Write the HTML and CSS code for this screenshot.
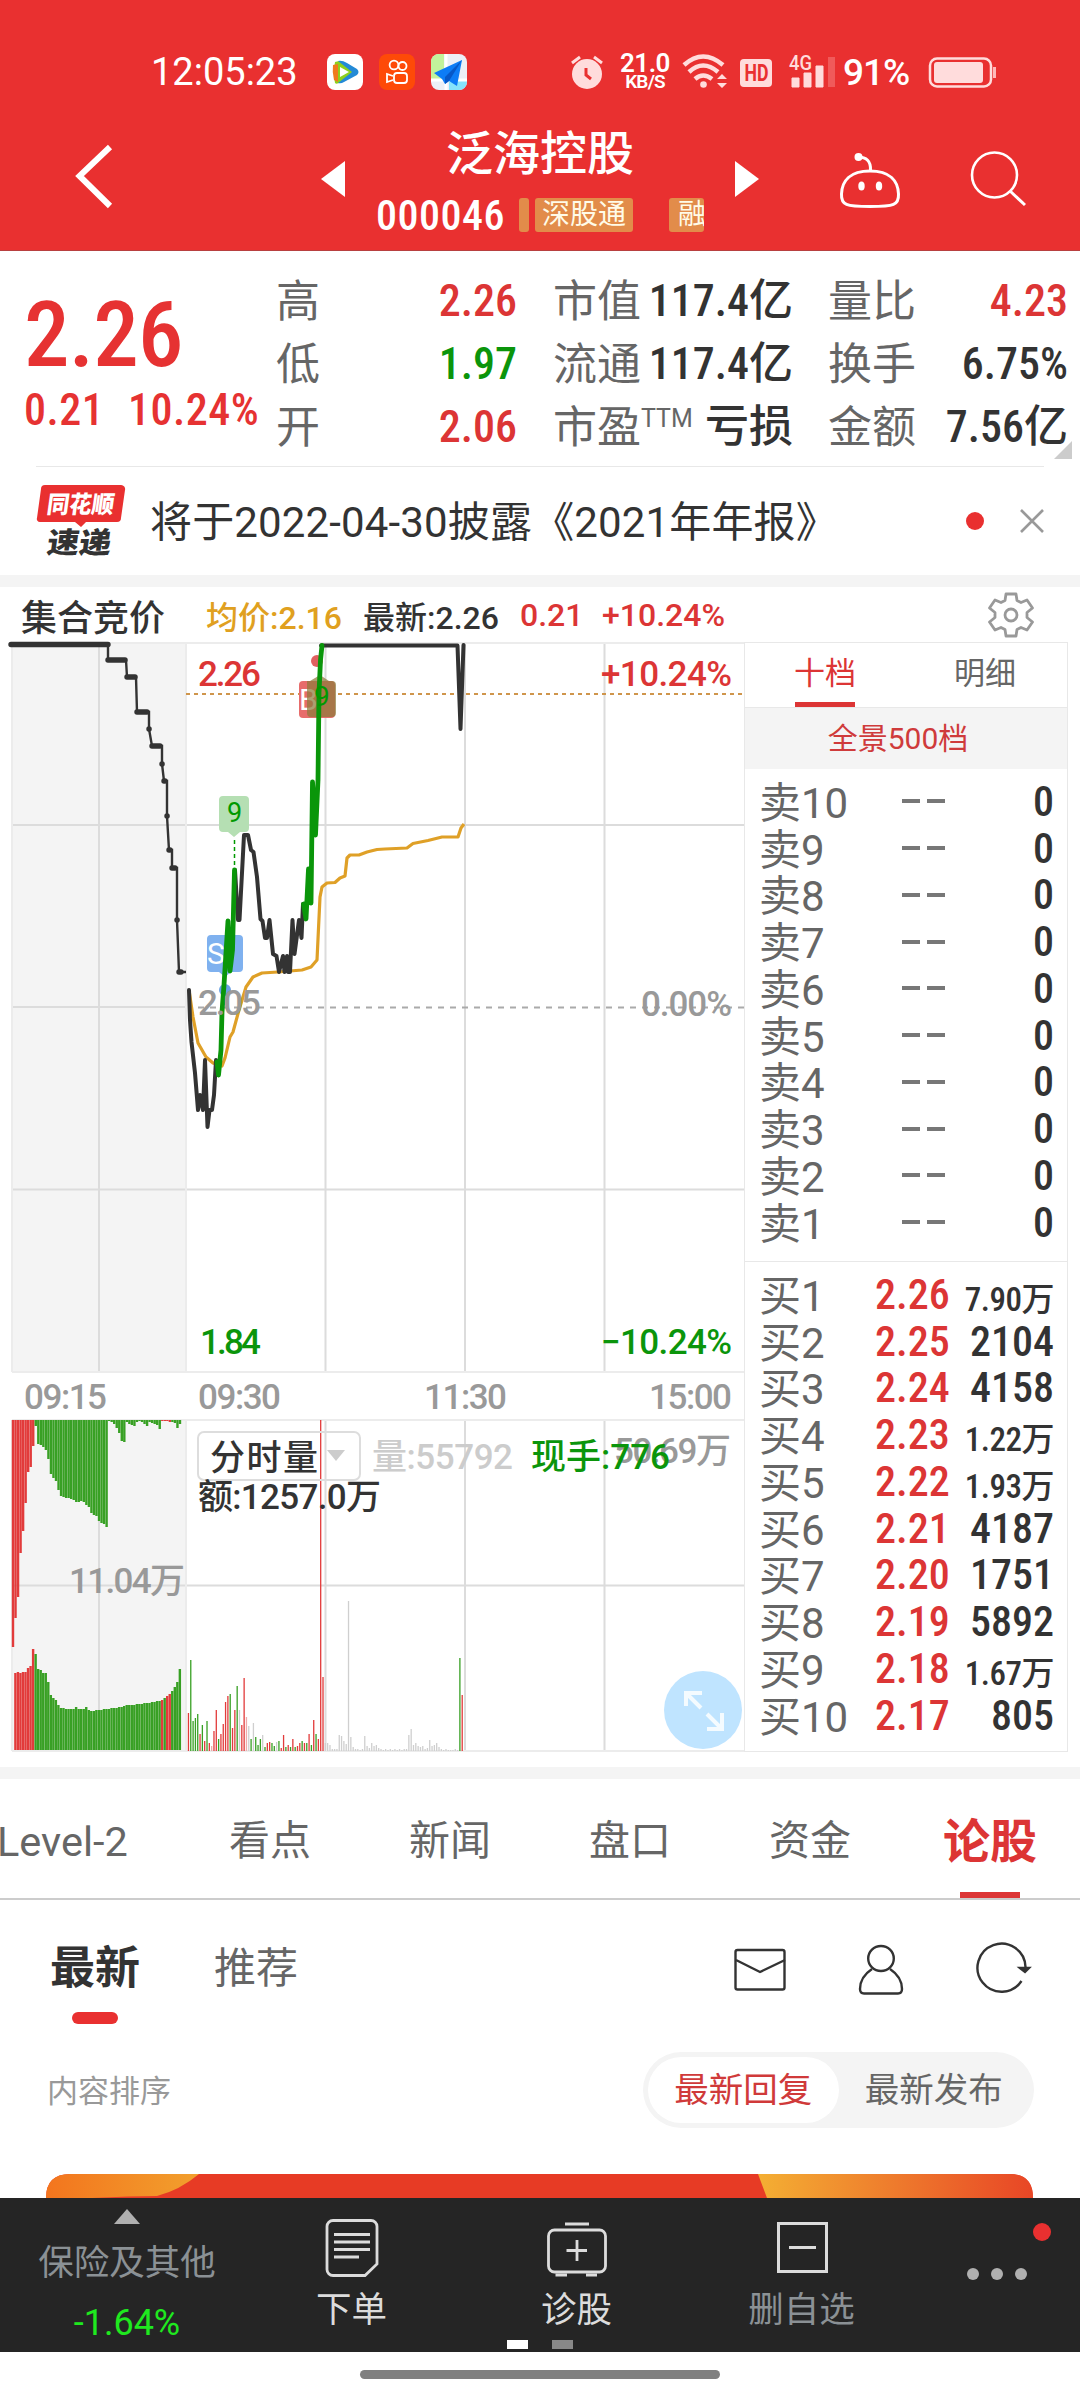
FILE: index.html
```html
<!DOCTYPE html>
<html lang="zh-CN">
<head>
    <meta charset="UTF-8">
    <title>泛海控股 000046</title>
    <link rel="stylesheet" href="styles.css">
</head>
<body>

    <header class="header">
        <div class="status">
            <span class="time">12:05:23</span>
            <svg class="apps" width="140" height="36" viewBox="327 54 140 36">
                <rect x="327" y="54" width="36" height="36" rx="8" fill="#fff"/>
                <path d="M335 62 Q333 72 335 83 Q337 85 342 81 L357 72 Q346 62 339 61Z" fill="#8ed01c"/>
                <path d="M333 65 Q332 72 334 80 L338 82 V64Z" fill="#f07a1c"/>
                <path d="M338 61 Q342 60 347 63 L357 69 Q360 72 357 75 L344 82 Q341 84 338 83 L352 72Z" fill="#238ad6"/>
                <path d="M340 67 L349 72 L340 77Z" fill="#fff"/>
                <rect x="379" y="54" width="36" height="36" rx="8" fill="#fe4a08"/>
                <g fill="none" stroke="#fff" stroke-width="1.8">
                    <circle cx="394" cy="65" r="4.4"/><circle cx="402.500" cy="66" r="4"/>
                    <rect x="394" y="73" width="13" height="10" rx="3"/><path d="M393 76 L387 74 V82 L393 80"/>
                </g>
                <rect x="431" y="54" width="36" height="36" rx="8" fill="#eceff6"/>
                <path d="M431 62 a8 8 0 0 1 8 -8 H444 V79 H431Z" fill="#c2f29b"/>
                <path d="M449 81 H467 V82 a8 8 0 0 1 -8 8 H449Z" fill="#86e3fb"/>
                <path d="M431 80 H467 M446 54 V90" stroke="#fff" stroke-width="3"/>
                <path d="M462 60 L434 73 L442 79 L445 84 L449 81 L457 86Z" fill="#0d7cf6"/>
                <path d="M462 60 L445 77 V84 L449 81Z" fill="#0758c8"/>
            </svg>
            <svg class="alarm" width="34" height="36" viewBox="570 54 34 36">
                <circle cx="587" cy="74" r="15" fill="#ffdcdc"/>
                <path d="M572 63 L580 57 M594 57 L602 63" stroke="#ffdcdc" stroke-width="3"/>
                <path d="M586 68 V75 L591 79" stroke="#e93030" stroke-width="3" fill="none"/>
            </svg>
            <span class="speed"><b>21.0</b><i>KB/S</i></span>
            <svg class="signal" width="152" height="36" viewBox="683 54 152 36">
                <g fill="none" stroke="#ffdcdc" stroke-width="4.500">
                    <path d="M684 65 Q703 48 723 65"/><path d="M689 72 Q703 59 718 72"/><path d="M695 79 Q703 72 712 79"/>
                </g>
                <circle cx="703.500" cy="84.500" r="3.300" fill="#ffdcdc"/>
                <path d="M717 79 L722 74 L727 79Z M717 83 L722 88 L727 83Z" fill="#ffdcdc"/>
                <rect x="740" y="59" width="32" height="28" rx="4" fill="#ffdcdc"/>
                <text x="744.500" y="81" class="hd" textLength="24" lengthAdjust="spacingAndGlyphs">HD</text>
                <text x="789" y="70" class="g4" textLength="23" lengthAdjust="spacingAndGlyphs">4G</text>
                <path d="M792 78 H799 V87 H792Z M804 73 H811 V87 H804Z M816 66 H823 V87 H816Z" fill="#ffdcdc" stroke="#ffdcdc" stroke-linejoin="round"/>
                <path d="M828 57 H835 V87 H828Z" fill="#f05a5a"/>
            </svg>
            <span class="percent">91%</span>
            <svg class="battery" width="70" height="36" viewBox="928 54 70 36">
                <rect x="931" y="58.500" width="61" height="28" rx="7" fill="none" stroke="#ffdcdc" stroke-width="2.500"/>
                <rect x="935" y="62" width="49" height="21" rx="3" fill="#ffdcdc"/>
                <path d="M995.500 67 V78" stroke="#ffb8b8" stroke-width="3"/>
            </svg>
        </div>
        <div class="nav">
            <svg class="back" width="40" height="70" viewBox="75 141 40 70"><path d="M110 147 L79.500 176 L110 206" fill="none" stroke="#fff" stroke-width="6"/></svg>
            <svg class="prev" width="24" height="36" viewBox="0 0 24 36"><path d="M24 0 V36 L0 18Z" fill="#fff"/></svg>
            <div class="stock">
                <h1>泛海控股</h1>
                <div class="code-row">
                    <span class="code num">000046</span>
                    <span class="tag tag-edge"></span>
                    <span class="tag">深股通</span>
                    <span class="tag tag-cut">融</span>
                </div>
            </div>
            <svg class="next" width="24" height="36" viewBox="0 0 24 36"><path d="M0 0 V36 L24 18Z" fill="#fff"/></svg>
            <svg class="robot" width="64" height="60" viewBox="838 150 64 60">
                <path d="M870 171 C890 171 898 181 898.500 194 C899 205 894 206.500 870 206.500 C846 206.500 841 205 841.500 194 C842 181 850 171 870 171Z" fill="none" stroke="#fff" stroke-width="3"/>
                <path d="M858 157 Q871 157 870.500 170" fill="none" stroke="#fff" stroke-width="3"/>
                <circle cx="858.500" cy="157" r="4" fill="#fff"/>
                <ellipse cx="861.500" cy="186" rx="3.200" ry="4.500" fill="#fff"/><ellipse cx="879" cy="186" rx="3.200" ry="4.500" fill="#fff"/>
            </svg>
            <svg class="search" width="58" height="60" viewBox="969 149 58 60">
                <circle cx="994.500" cy="175" r="22.500" fill="none" stroke="#fff" stroke-width="2.600"/>
                <path d="M1010 191 L1025 205" stroke="#fff" stroke-width="3"/>
            </svg>
        </div>
    </header>

    <section class="quote">
        <div class="price">
            <div class="now num">2.26</div>
            <div class="change num"><span>0.21</span><span>10.24%</span></div>
        </div>
        <dl class="stats stats-a">
            <div><dt>高</dt><dd class="num red">2.26</dd></div>
            <div><dt>低</dt><dd class="num green">1.97</dd></div>
            <div><dt>开</dt><dd class="num red">2.06</dd></div>
        </dl>
        <dl class="stats stats-b">
            <div><dt>市值</dt><dd class="num">117.4亿</dd></div>
            <div><dt>流通</dt><dd class="num">117.4亿</dd></div>
            <div><dt>市盈<sup>TTM</sup></dt><dd>亏损</dd></div>
        </dl>
        <dl class="stats stats-c">
            <div><dt>量比</dt><dd class="num red">4.23</dd></div>
            <div><dt>换手</dt><dd class="num">6.75%</dd></div>
            <div><dt>金额</dt><dd class="num">7.56亿</dd></div>
        </dl>
    </section>

    <section class="news">
        <svg class="logo" width="90" height="76" viewBox="36 483 90 76">
            <path d="M45 485 H121 a4 4 0 0 1 4 5 L121 518 a4 4 0 0 1 -4 4 H86 L81 527 L75 522 H40 a3 3 0 0 1 -3 -4 L41 489 a4 4 0 0 1 4 -4Z" fill="#e93030"/>
            <text class="logo-top" x="0" y="0" transform="translate(46 513) skewX(-8)" textLength="67" lengthAdjust="spacingAndGlyphs">同花顺</text>
            <text class="logo-bottom" x="0" y="0" transform="translate(46 553) skewX(-8)" textLength="64" lengthAdjust="spacingAndGlyphs">速递</text>
        </svg>
        <p>将于2022-04-30披露《2021年年报》</p>
        <span class="dot"></span>
        <svg class="close" width="24" height="24" viewBox="0 0 24 24"><path d="M1 1 L23 23 M23 1 L1 23" stroke="#999" stroke-width="2.600"/></svg>
    </section>

    <div class="gap"></div>

    <section class="legend">
        <span class="auction">集合竞价</span>
        <span class="avg">均价:2.16</span>
        <span class="last">最新:2.26</span>
        <span class="diff">0.21</span>
        <span class="pct">+10.24%</span>
        <svg class="gear" width="48" height="48" viewBox="-24 -24 48 48" fill="none" stroke="#999" stroke-width="2.800" stroke-linejoin="round">
            <path d="M-5 -21 H5 L6 -14.500 L10 -12.500 L16 -15 L21.500 -7 L16 -2.500 V2.500 L21.500 7 L16 15 L10 12.500 L6 14.500 L5 21 H-5 L-6 14.500 L-10 12.500 L-16 15 L-21.500 7 L-16 2.500 V-2.500 L-21.500 -7 L-16 -15 L-10 -12.500 L-6 -14.500Z"/>
            <circle r="6"/>
        </svg>
    </section>

    <main class="board">
        <svg class="chart" width="744" height="1125" viewBox="0 642 744 1125">
            <!-- 网格 -->
            <rect x="12" y="643" width="174" height="729" fill="#f4f4f4"/>
            <rect x="12" y="1420" width="174" height="331" fill="#f4f4f4"/>
            <g class="grid">
                <path d="M99 643 V1372 M325.500 643 V1372 M465 643 V1372 M604.500 643 V1372 M12 825 H744 M12 1007 H186 M12 1189.500 H744"/>
                <path d="M99 1420 V1751 M325.500 1420 V1751 M465 1420 V1751 M604.500 1420 V1751 M12 1585.500 H744"/>
            </g>
            <path class="frame" d="M12 643 H744 M12 1372 H744 M12 643 V1372 M186 643 V1372 M12 1420 H744 M12 1751 H744 M12 1420 V1751 M186 1420 V1751"/>
            <path d="M186 694 H744" stroke="#cf954b" stroke-width="2" stroke-dasharray="4 4"/>
            <path d="M198 1007.500 H744" stroke="#aaa" stroke-width="1.800" stroke-dasharray="6 6"/>

            <!-- 成交量 -->
            <g id="bars"></g>

            <!-- 均价线 -->
            <path class="avg-line" d="M189 990 L193 1017 L198 1043 L206 1057 L213 1063 L222 1066 L225 1058 L230 1037 L233 1032 L239 1010 L243 997 L246 987 L253 977 L262 973 L278 972 L302 970 L311 967 L317 960 L320 897 L322 887 L327 883 L335 882.500 L340 878 L345 876 L347 858 L350 855 L359 855 L367 852 L377 849.500 L385 849 L407 848 L413 843.500 L428 840.500 L442 837 L458 837 L461 828 L464 824"/>

            <!-- 买卖标记 -->
            <path d="M211 935 H239 a4 4 0 0 1 4 4 V968 a4 4 0 0 1 -4 4 H231 L225 977 L219 972 H211 a4 4 0 0 1 -4 -4 V939 a4 4 0 0 1 4 -4Z" fill="#7fb1ef"/>
            <circle cx="225" cy="990" r="6" fill="#6ba2e4"/>
            <text class="mark" x="207" y="964" font-size="30" fill="#fff">S</text>
            <path d="M223 796 H245 a4 4 0 0 1 4 4 V828 a4 4 0 0 1 -4 4 H240 L234 837 L228 832 H223 a4 4 0 0 1 -4 -4 V800 a4 4 0 0 1 4 -4Z" fill="#b5dfb3"/>
            <path d="M234.500 840 V868" stroke="#090" stroke-width="1.500" stroke-dasharray="4 3"/>
            <circle cx="317" cy="661" r="6" fill="#e06060"/>
            <rect x="299" y="681" width="36" height="37" rx="4" fill="#e76c6b"/>
            <text class="mark" x="299" y="710" font-size="30" fill="#fff">B</text>
            <path d="M310 681 L320 675 L329 681 H332 a4 4 0 0 1 4 4 V713 a4 4 0 0 1 -4 4 H311 a4 4 0 0 1 -4 -4 V681Z" fill="#8f7a3a" fill-opacity=".72"/>

            <!-- 价格线 -->
            <path class="price-line" d="M10 644 H108 V660 H126 L127 677 H136 L137 712 H149 V729 L152 746 H162 V764 L164 781 H167 V816 L169 850 H172 V868 H177 V920 L179 972 H186" />
            <path class="price-flat" d="M11 644.500 H108 M108 660 H125 M127 677 H135 M137 712 H147 M149 729 h.1 M152 746 H160 M162 764 h.1 M164 781 h1 M167 816 h.1 M169 850 h1 M172 868 H175 M177 920 h.1 M179 972 h2"/>
            <path class="trend" d="M189 990 L190 1020 L191.500 1042 L195 1073 L198 1110 L200 1095 L203 1110 L205 1060 L207.500 1127 L209.500 1110 H212 L214 1095 L216 1060 L218 1075"/>
            <path class="trend" d="M235 870 L238 920 H239.500 L244 835 H248 L251 850 L253.500 852 L257 877 L260.500 919 L262.500 921 L265 938 H267 L269.500 920 L273 954 L276.500 956 L279 972 L283 956 L284.500 972 L287 956 L288 972 H290 L292.500 920 L294.500 954 L299 920 L301.500 938 L303 904"/>
            <path class="trend" d="M321 645.500 H457.500 L460.500 729 L463.500 645"/>
            <path class="trend up" d="M217 1062 L218.500 1075 L221 1050 L222 1012 L224 985 L228 921 L230 971 L232.500 950 L234.500 870"/>
            <path class="trend up" d="M303.500 904 L306 919 L308.500 869 L311 903 L312.500 782 L315.500 835 L318 780 L319 693 L320.500 660 L322 645.500"/>

            <!-- 坐标文字 -->
            <text class="axis red" x="198" y="686" textLength="63">2.26</text>
            <text class="axis gray" x="198" y="1015" textLength="63">2.05</text>
            <text class="axis green" x="200" y="1354" textLength="61">1.84</text>
            <text class="axis red" x="601" y="686" textLength="131">+10.24%</text>
            <text class="axis gray" x="641" y="1016" textLength="91">0.00%</text>
            <text class="axis green" x="601" y="1354" textLength="131">−10.24%</text>
            <text class="axis gray" x="24" y="1409" textLength="83">09:15</text>
            <text class="axis gray" x="198" y="1409" textLength="83">09:30</text>
            <text class="axis gray" x="424" y="1409" textLength="83">11:30</text>
            <text class="axis gray" x="649" y="1409" textLength="83">15:00</text>
            <text class="axis gray" x="69" y="1593" textLength="116">11.04万</text>
            <text class="axis gray" x="614" y="1463" textLength="117">50.69万</text>
            <text class="mark" x="227" y="822" font-size="27" fill="#090">9</text>
            <text class="mark" x="314" y="706" font-size="28" fill="#090">9</text>

            <rect x="198" y="1432" width="162" height="48" rx="6" fill="none" stroke="#ddd" stroke-width="2"/>
            <text class="axis dark" x="210" y="1470" textLength="108">分时量</text>
            <path d="M327 1450 H345 L336 1461Z" fill="#ccc"/>
            <text class="axis pale" x="372" y="1469" textLength="141">量:55792</text>
            <text class="axis green" x="531" y="1469" textLength="139">现手:776</text>
            <text class="axis dark" x="198" y="1509" textLength="183">额:1257.0万</text>

            <circle cx="703" cy="1710" r="39" fill="#bfe4ff"/>
            <g fill="none" stroke="#f4fbff" stroke-width="4">
                <path d="M686 1706 V1693 H702 M687 1694 L701 1708"/>
                <path d="M722 1713 V1729 H707 M721 1728 L707 1714"/>
            </g>
        </svg>

        <aside class="book">
            <div class="book-tabs"><span class="active">十档</span><span>明细</span></div>
            <div class="depth">全景500档</div>
            <ul id="sell" class="orders"></ul>
            <ul id="buy" class="orders buy"></ul>
        </aside>
    </main>

    <div class="gap"></div>

    <nav class="tabs">
        <span class="first">Level-2</span>
        <span>看点</span>
        <span>新闻</span>
        <span>盘口</span>
        <span>资金</span>
        <span class="active">论股</span>
    </nav>

    <section class="posts">
        <div class="posts-head">
            <span class="newest">最新</span>
            <span class="recommend">推荐</span>
            <svg width="300" height="56" viewBox="732 1942 300 56" fill="none" stroke="#333" stroke-width="2.400">
                <rect x="735.500" y="1950" width="49" height="39.500" rx="2"/>
                <path d="M736 1960 L760 1972 L785 1960"/>
                <ellipse cx="881" cy="1958.500" rx="12.800" ry="12.500"/>
                <path d="M872 1969 Q860 1977 860 1989 Q860 1993.500 864 1993.500 H898 Q902 1993.500 902 1989 Q902 1977 890 1969"/>
                <path d="M1021.500 1981 A24 24 0 1 1 1025.500 1967"/>
                <path d="M1020 1968 L1025 1972 L1029 1968Z" fill="#333"/>
            </svg>
        </div>
        <div class="sort">
            <span class="sort-label">内容排序</span>
            <div class="switch"><span class="on">最新回复</span><span>最新发布</span></div>
        </div>
        <svg class="banner" width="987" height="24" viewBox="46 2174 987 24">
            <defs>
                <linearGradient id="left"><stop offset="0" stop-color="#f3751e"/><stop offset="1" stop-color="#f2a02d"/></linearGradient>
                <linearGradient id="right"><stop offset="0" stop-color="#f4af33"/><stop offset="1" stop-color="#e84626"/></linearGradient>
            </defs>
            <path d="M46 2198 Q46 2174 70 2174 H1010 Q1033 2174 1033 2198Z" fill="#e73b25"/>
            <path d="M46 2198 Q46 2174 70 2174 H199 Q180 2190 157 2196 Q130 2196 92 2198Z" fill="url(#left)"/>
            <path d="M758 2174 H1010 Q1033 2174 1033 2198 H767Z" fill="url(#right)"/>
        </svg>
    </section>

    <footer class="toolbar">
        <div class="item index">
            <svg width="26" height="15" viewBox="0 0 26 15"><path d="M0 15 L13 0 L26 15Z" fill="#b0b0b0"/></svg>
            <span>保险及其他</span>
            <b>-1.64%</b>
        </div>
        <div class="item">
            <svg width="60" height="60" viewBox="322 2218 60 60" fill="none" stroke="#dcdcdc" stroke-width="2.800">
                <path d="M333 2220.500 H371 a6 6 0 0 1 6 6 V2264 L365 2275.500 H333 a6 6 0 0 1 -6 -6 V2226.500 a6 6 0 0 1 6 -6Z"/>
                <path d="M334 2234.500 H370 M334 2242 H370 M334 2249.500 H370 M334 2257 H359"/>
            </svg>
            <span>下单</span>
        </div>
        <div class="item">
            <svg width="64" height="60" viewBox="545 2218 64 60" fill="none" stroke="#dcdcdc" stroke-width="2.800">
                <rect x="548.500" y="2230" width="57" height="42" rx="6"/>
                <path d="M565 2224 H589 M577 2240 V2261 M566.500 2250.500 H587"/>
                <path d="M555.500 2275 H567 M586 2275 H597"/>
            </svg>
            <span>诊股</span>
        </div>
        <div class="item dim">
            <svg width="60" height="60" viewBox="771 2218 60 60" fill="none" stroke="#dcdcdc" stroke-width="3">
                <rect x="777.500" y="2223.500" width="48" height="48"/><path d="M788 2247.500 H815"/>
            </svg>
            <span>删自选</span>
        </div>
        <div class="item more"><i></i><i></i><i></i></div>
        <div class="pager"><i></i><i></i></div>
    </footer>
    <div class="home"></div>

    <script>
        // 盘口十档
        var sell = [10, 9, 8, 7, 6, 5, 4, 3, 2, 1];
        var buy = [
            ["2.26", "7.90万"], ["2.25", "2104"], ["2.24", "4158"], ["2.23", "1.22万"], ["2.22", "1.93万"],
            ["2.21", "4187"], ["2.20", "1751"], ["2.19", "5892"], ["2.18", "1.67万"], ["2.17", "805"]
        ];
        var html = "";
        sell.forEach(function (n) {
            html += '<li><span>卖' + n + '</span><span class="none"><i></i><i></i></span><b class="num">0</b></li>';
        });
        document.getElementById("sell").innerHTML = html;
        html = "";
        buy.forEach(function (row, i) {
            var small = row[1].indexOf("万") > 0 ? " small" : "";
            html += '<li><span>买' + (i + 1) + '</span><em class="num">' + row[0] + '</em><b class="num' + small + '">' + row[1] + '</b></li>';
        });
        document.getElementById("buy").innerHTML = html;

        // 柱状图, 每项为 颜色+高度
        var colors = { r: "#e23b3b", g: "#38a024", p: "#efaaaa", l: "#cfcfcf" };
        var bars = "";
        function draw(list, x, step, width, base, down) {
            list.split(" ").forEach(function (item, i) {
                var h = parseFloat(item.slice(1));
                var left = (x + i * step).toFixed(2);
                bars += '<rect x="' + left + '" y="' + (down ? base : base - h) + '" width="' + width + '" height="' + h + '" fill="' + colors[item[0]] + '"/>';
            });
        }
        draw("r227 r198 r177 r133 r111 r83 r52 r47 r26 g6 g24 g25 g27 g30 g39 g54 g58 g61 g70 g76 g77 g78 g78 g79 g80 g82 g82 g81 g82 g85 g87 g93 g95 g96 g101 g103 g104 g107 g1 g2 g4 g8 g13 g21 g22 g2 g4 g5 g6 g2 g1 g2 g4 g6 g2 g3 g4 g5 g9 r1 r1 r1 r2 g2 g3 g8 g4",
            11.8, 2.53, 2.4, 1420, true);
        draw("r77 r78 r77 r78 r78 r82 r84 r101 g96 g81 g80 g77 g77 g68 g55 g52 g50 g45 g42 g42 g41 g41 g41 g41 g43 g41 g41 g41 g43 g40 g39 g39 g40 g40 g40 g41 g41 g41 g42 g42 g42 g43 g43 g44 g45 g45 g45 g45 g46 g46 g46 g47 g47 g47 g48 g48 g49 g49 r50 g52 r54 r56 g59 g63 g68 g81",
            14.2, 2.53, 2.4, 1750, false);
        draw("r38 g91 g30 g33 g37 r17 g26 r10 g30 r8 p5 r20 r41 g12 r17 r27 r49 r55 g57 r23 r41 g65 l41 r26 r73 p34 l25 g12 l28 g14 g6 g12 l16 g4 r8 r9 g8 g5 l9 g10 r3 r16 g4 r6 g4 r12 g4 r5 r8 g10 r8 g8 r17 g6 r31 g17 r12 r331 r74 l8 l8 l6 l2 l2 l2 l16 l15 l10 l7 l150 l14 l4 l2 l2 l1 l2 l15 l5 l3 l8 l5 l6 l3 l2 l1 l2 l1 l2 l1 l2 l1 l2 l1 l2 l2 l16 l22 l6 l8 l5 l4 l5 l2 l3 l11 l5 l6 l8 l4 l2 l1 l2 l1 l1 l1 l2 l1 g93 r56",
            187.8, 2.32, 1.3, 1751, false);
        document.getElementById("bars").innerHTML = bars;
    </script>

</body>
</html>
```
FILE: styles.css
```css
* {
    box-sizing: border-box;
}
body {
    margin: 0;
    width: 1080px;
    height: 2400px;
    overflow: hidden;
    display: flex;
    flex-direction: column;
    background: #fff;
    color: #333;
    font-family: Roboto, "Noto Sans CJK SC", sans-serif;
}
h1, p, ul, dl, dd {
    margin: 0;
    padding: 0;
}
ul {
    list-style: none;
}
i, em {
    font-style: normal;
}
svg {
    flex: none;
    overflow: visible;
}
.num {
    font-weight: 500;
    font-stretch: 86%;
}
.red {
    color: #dc3535;
    fill: #dc3535;
}
.green {
    color: #0b950b;
    fill: #0b950b;
}

/* 顶部 */
.header {
    display: flow-root;
    height: 251px;
    flex: none;
    background: #e93030;
    border-bottom: 1px solid #b84040;
    color: #fff;
}
.status {
    display: flex;
    align-items: center;
    height: 36px;
    margin-top: 54px;
}
.time {
    width: 176px;
    margin-left: 151px;
    font-size: 38px;
    white-space: nowrap;
}
.alarm {
    margin-left: 103px;
}
.speed {
    display: flex;
    flex-direction: column;
    align-items: center;
    width: 50px;
    margin: 0 13px 0 16px;
    line-height: 19px;
}
.speed b {
    font-size: 26px;
    font-weight: 600;
    letter-spacing: -0.5px;
}
.speed i {
    margin-top: 1px;
    font-size: 19px;
    line-height: 16px;
    font-weight: 600;
    letter-spacing: -0.8px;
}
.hd {
    font-size: 24px;
    font-weight: 700;
    fill: #e93030;
}
.g4 {
    font-size: 20px;
    font-weight: 500;
    fill: #ffdcdc;
}
.percent {
    width: 84px;
    margin-left: 8px;
    font-size: 37px;
    font-weight: 500;
    letter-spacing: -1px;
}
.nav {
    display: flex;
    align-items: flex-start;
    margin-top: 38px;
}
.back {
    margin: 13px 0 0 75px;
}
.prev {
    margin: 33px 0 0 206px;
}
.stock {
    width: 328px;
    margin: 0 31px;
}
.stock h1 {
    padding-top: 1px;
    font-size: 47px;
    font-weight: 500;
    line-height: 50px;
    text-align: center;
}
.code-row {
    display: flex;
    align-items: center;
    height: 36px;
    margin-top: 18px;
}
.code {
    width: 143px;
    font-size: 42px;
    letter-spacing: 0.5px;
}
.tag {
    height: 34px;
    margin-right: 36px;
    padding: 0 7px;
    border-radius: 3px;
    background: #e28c4a;
    color: #fffbe8;
    font-size: 28px;
    line-height: 34px;
    white-space: nowrap;
}
.tag-edge {
    width: 10px;
    margin-right: 6px;
    padding: 0;
}
.tag-cut {
    width: 35px;
    margin-right: 0;
    padding: 0 0 0 9px;
    overflow: hidden;
    flex: none;
}
.next {
    margin-top: 33px;
}
.robot {
    margin: 22px 0 0 79px;
}
.search {
    margin: 21px 0 0 67px;
}

/* 行情 */
.quote {
    position: relative;
    display: flex;
    height: 216px;
    flex: none;
    padding-top: 19px;
}
.quote::before {
    content: "";
    position: absolute;
    left: 36px;
    right: 36px;
    bottom: 0;
    border-bottom: 1px solid #e8e8e8;
}
.quote::after {
    content: "";
    position: absolute;
    right: 8px;
    bottom: 8px;
    border: 9px solid #ccc;
    border-top-color: transparent;
    border-left-color: transparent;
}
.price {
    width: 276px;
    padding-left: 24px;
    color: #e63232;
}
.now {
    margin-top: 20px;
    font-size: 91px;
    line-height: 90px;
    letter-spacing: -0.8px;
}
.change {
    display: flex;
    margin-top: 5px;
    font-size: 44px;
    line-height: 50px;
    letter-spacing: 0.5px;
}
.change span:first-child {
    width: 104px;
}
.stats {
    line-height: 63px;
    font-size: 44px;
    white-space: nowrap;
}
.stats div {
    display: flex;
    justify-content: space-between;
    height: 63px;
}
.stats dt {
    padding-top: 1px;
    color: #666;
}
.stats dd {
    font-weight: 500;
}
.stats-a {
    width: 241px;
}
.stats-b {
    width: 240px;
    margin-left: 36px;
}
.stats-c {
    width: 240px;
    margin-left: 35px;
}
.stats sup {
    font-size: 25px;
    line-height: 0;
}

/* 公告 */
.news {
    display: flex;
    align-items: center;
    height: 108px;
    flex: none;
    padding: 0 36px;
}
.logo-top {
    font-size: 24px;
    font-weight: 900;
    fill: #fff;
}
.logo-bottom {
    font-size: 29px;
    font-weight: 900;
    fill: #333;
}
.news p {
    flex: 1;
    margin: -6px 0 0 24px;
    font-size: 42px;
    letter-spacing: 0.15px;
}
.dot {
    width: 18px;
    height: 18px;
    margin-right: 36px;
    border-radius: 50%;
    background: #e93030;
}
.gap {
    height: 12px;
    flex: none;
    background: #f4f4f4;
}

/* 分时图 */
.legend {
    display: flex;
    align-items: center;
    height: 55px;
    flex: none;
    padding: 1px 45px 0 21px;
    font-size: 32px;
    font-weight: 500;
    font-stretch: 93%;
    white-space: nowrap;
}
.auction {
    width: 185px;
    font-size: 36px;
}
.avg {
    width: 157px;
    color: #e0a020;
}
.last {
    width: 157px;
}
.diff {
    width: 82px;
    color: #dc3535;
}
.pct {
    color: #dc3535;
}
.gear {
    margin-left: auto;
}
.board {
    display: flex;
    height: 1125px;
    flex: none;
}
.grid {
    fill: none;
    stroke: #dcdcdc;
    stroke-width: 2;
}
.frame {
    fill: none;
    stroke: #ececec;
    stroke-width: 2;
}
.avg-line {
    fill: none;
    stroke: #dfa027;
    stroke-width: 3.2;
    stroke-linejoin: round;
}
.price-line {
    fill: none;
    stroke: #333;
    stroke-width: 2.4;
}
.price-flat {
    fill: none;
    stroke: #333;
    stroke-width: 5.4;
    stroke-linecap: round;
}
.trend {
    fill: none;
    stroke: #333;
    stroke-width: 4;
    stroke-linecap: round;
    stroke-linejoin: round;
}
.up {
    stroke: #0a960a;
    stroke-width: 4.8;
}
.axis {
    font-size: 35px;
    font-weight: 500;
    font-stretch: 89%;
}
.gray {
    fill: #999;
}
.dark {
    fill: #333;
}
.pale {
    fill: #ccc;
}

/* 盘口 */
.book {
    width: 324px;
    height: 1110px;
    border: 1px solid #e8e8e8;
}
.book-tabs {
    display: flex;
    height: 65px;
    border-bottom: 1px solid #e8e8e8;
    font-size: 31px;
    line-height: 62px;
    text-align: center;
}
.book-tabs span {
    width: 60px;
    margin-left: 50px;
    color: #666;
    text-indent: -1px;
    white-space: nowrap;
}
.book-tabs span + span {
    margin-left: 100px;
}
.book-tabs .active {
    border-bottom: 5px solid #dc3535;
    color: #dc3535;
}
.depth {
    height: 61px;
    padding-right: 16px;
    background: #f4f4f4;
    color: #cf3b3b;
    font-size: 30px;
    line-height: 61px;
    text-align: center;
}
.orders {
    padding: 9px 13px 0 14px;
    height: 492px;
    font-size: 42px;
}
.buy {
    border-top: 1px solid #e8e8e8;
}
.orders li {
    display: flex;
    align-items: center;
    height: 46.75px;
    color: #666;
    white-space: nowrap;
}
.orders li > span:first-child {
    width: 116px;
    margin-top: -4px;
}
.orders em {
    color: #dc3535;
}
.orders b {
    margin-left: auto;
    color: #333;
}
.orders .small {
    font-size: 33px;
    padding-top: 5px;
    letter-spacing: -0.5px;
}
.none {
    display: flex;
    gap: 7px;
    margin-left: 27px;
}
.none i {
    width: 18px;
    height: 4px;
    background: #777;
}

/* 栏目 */
.tabs {
    display: flex;
    height: 121px;
    flex: none;
    border-bottom: 2px solid #ccc;
    color: #666;
    font-size: 41px;
    line-height: 125px;
    text-align: center;
}
.tabs span {
    width: 180px;
}
.tabs .first {
    text-align: left;
    font-size: 41.5px;
    text-indent: -3px;
}
.tabs .active {
    position: relative;
    color: #dc3535;
    font-size: 47px;
    font-weight: 700;
}
.tabs .active::after {
    content: "";
    position: absolute;
    left: 60px;
    bottom: 0;
    width: 60px;
    height: 6px;
    background: #dc3535;
}

/* 帖子 */
.posts {
    height: 298px;
    flex: none;
    padding-top: 35px;
}
.posts-head {
    display: flex;
    align-items: flex-start;
    height: 117px;
    padding-left: 50px;
    line-height: 68px;
}
.newest {
    display: flex;
    flex-direction: column;
    align-items: center;
    width: 90px;
    font-size: 45px;
    font-weight: 700;
}
.newest::after {
    content: "";
    width: 46px;
    height: 12px;
    margin-top: 9px;
    border-radius: 6px;
    background: #e93030;
}
.recommend {
    width: 518px;
    margin-left: 74px;
    color: #666;
    font-size: 42px;
}
.posts-head svg {
    margin-top: 7px;
}
.sort {
    display: flex;
    align-items: center;
    justify-content: space-between;
    height: 76px;
    padding: 0 46px 0 47px;
}
.sort-label {
    margin-top: -3px;
    color: #999;
    font-size: 31px;
}
.switch {
    display: flex;
    width: 391px;
    height: 76px;
    padding: 5px;
    border-radius: 38px;
    background: #f4f4f4;
    color: #666;
    font-size: 34.5px;
    line-height: 67px;
    text-align: center;
}
.switch span {
    width: 191px;
}
.switch .on {
    border-radius: 33px;
    background: #fff;
    color: #d03a3a;
}
.banner {
    display: block;
    margin: 46px 0 0 46px;
}

/* 底部 */
.toolbar {
    position: relative;
    display: flex;
    height: 154px;
    flex: none;
    background: #252525;
    color: #dcdcdc;
    font-size: 35.5px;
    line-height: 42px;
}
.item {
    display: flex;
    flex-direction: column;
    align-items: center;
    width: 225px;
    padding-top: 20px;
}
.item span {
    margin-top: 11px;
}
.index {
    width: 239px;
    padding: 11px 0 0 15px;
    color: #8b9195;
}
.index span {
    margin-top: 18px;
}
.index b {
    margin-top: 19px;
    color: #1fe91f;
    font-size: 36px;
    font-weight: 400;
    line-height: 40px;
}
.dim span {
    color: #8b9195;
}
.more {
    position: relative;
    flex-direction: row;
    justify-content: center;
    align-items: flex-start;
    gap: 12px;
    width: 166px;
    padding-top: 70px;
}
.more i {
    width: 12px;
    height: 12px;
    border-radius: 50%;
    background: #b0b0b0;
}
.more::after {
    content: "";
    position: absolute;
    right: 29px;
    top: 25px;
    width: 18px;
    height: 18px;
    border-radius: 50%;
    background: #e93030;
}
.pager {
    position: absolute;
    left: 507px;
    bottom: 3px;
    display: flex;
    gap: 24px;
}
.pager i {
    width: 21px;
    height: 9px;
    background: #fff;
}
.pager i + i {
    background: #888;
}
.home {
    width: 360px;
    height: 9px;
    margin: 18px auto 0;
    border-radius: 5px;
    background: #808080;
    flex: none;
}
```
